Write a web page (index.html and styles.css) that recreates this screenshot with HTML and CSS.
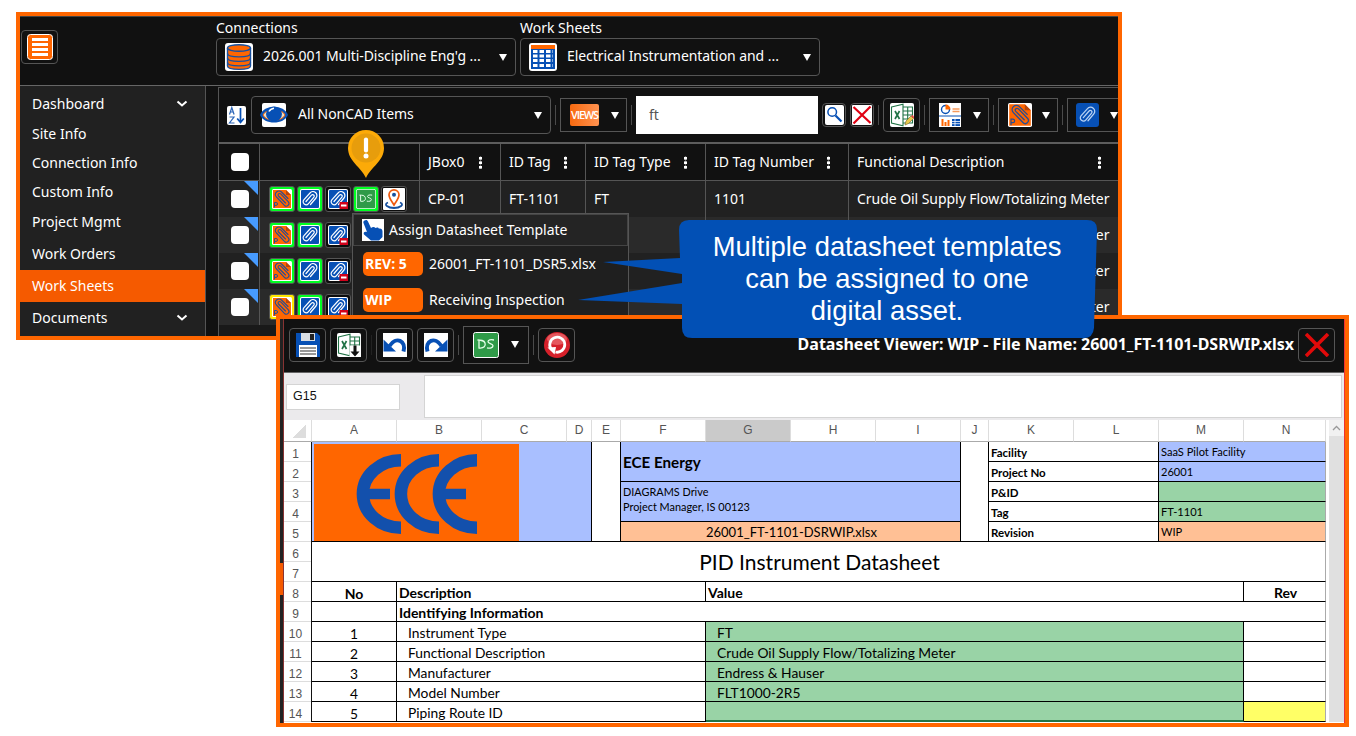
FILE: index.html
```html
<!DOCTYPE html>
<html lang="en">
<head>
  <meta charset="UTF-8">
  <meta name="viewport" content="width=device-width, initial-scale=1.0">
  <title>Work Sheets - Datasheet Viewer</title>
  <link rel="stylesheet" href="styles.css">
</head>
<body>
  <!-- Shared icons -->
  <svg class="defs" width="0" height="0">
    <symbol id="i-clip" viewBox="0 0 20 20">
      <path d="M6 12.500 11.500 6.200a1.500 1.500 0 0 1 2.400 2L8.500 14.600a3 3 0 0 1-4.700-3.800L10 4a3.800 3.800 0 0 1 6 5l-5.500 6.500" fill="none" stroke="currentColor" stroke-width="1.200" stroke-linecap="round"/>
    </symbol>
    <symbol id="i-punch" viewBox="0 0 20 20">
      <rect width="20" height="20" rx="1.500" fill="#fff"/>
      <path d="M1 1h13l5 5v13H1z" fill="#f60"/>
      <path d="M14 1v5h5z" fill="#b9450a"/>
      <path d="M13.500 14 6.500 7a1.500 1.500 0 0 1 2.200-2.100l7.500 7.800a2.600 2.600 0 0 1-3.800 3.600L4.500 8a3.500 3.500 0 0 1 5-5l6.500 6.500" fill="none" stroke="#274d92" stroke-width="1.100" stroke-linecap="round"/>
      <path d="M2.500 18.500v-5h1.600a1.400 1.400 0 0 1 0 2.900H2.500" fill="none" stroke="#274d92"/>
    </symbol>
    <symbol id="i-attach" viewBox="0 0 20 20">
      <rect width="20" height="20" rx="2" fill="#fff"/>
      <rect x="1" y="1" width="18" height="18" rx="1" fill="#0750b5"/>
      <use href="#i-clip" color="#fff"/>
    </symbol>
    <symbol id="i-detach" viewBox="0 0 20 20">
      <use href="#i-attach"/>
      <rect x="11.500" y="13" width="8.500" height="7" fill="#d0021b"/>
      <path d="M13 16.500h5.500" stroke="#fff" stroke-width="2"/>
    </symbol>
    <symbol id="i-pin" viewBox="0 0 22 22">
      <rect width="22" height="22" rx="1" fill="#fff"/>
      <path d="M5 14.500c-5 2 0 5.500 6 5.500s11-3.500 6-5.500" fill="none" stroke="#17509f" stroke-width="1.800"/>
      <path d="M11 17C8 12 6 10 6 6.800a5 5 0 0 1 10 0C16 10 14 12 11 17z" fill="#fff" stroke="#f0590d" stroke-width="1.700"/>
      <circle cx="11" cy="6.800" r="2" fill="#17509f"/>
    </symbol>
    <symbol id="i-ds" viewBox="0 0 26 26">
      <rect x=".500" y=".500" width="25" height="25" rx="2" fill="#2f9a48" stroke="#fff"/>
      <path d="M6 8v8c5 .500 7-2 6-5S8 8 4.500 8M21 8c-3.500-.700-6 0-6 1.700 0 2.100 5 1.600 5 4.100 0 2-3 2.700-6 2" fill="none" stroke="#e5ffe9" stroke-width="1.300"/>
    </symbol>
    <symbol id="i-excel" viewBox="0 0 24 24">
      <rect width="24" height="24" rx="2" fill="#fff"/>
      <path d="M1.500 4 13 1.300v21.400L1.500 20z" fill="#fff" stroke="#217346" stroke-width="1.100"/>
      <path d="m5 8 4.500 8m0-8L5 16" stroke="#217346" stroke-width="1.700"/>
      <path d="M13 4h9.500v16H13M13 8h9.500M13 12h9.500M13 16h9.500M17.700 4v16" fill="none" stroke="#217346" stroke-width="1.100"/>
    </symbol>
    <symbol id="i-undo" viewBox="0 0 24 24">
      <rect width="24" height="24" fill="#fff"/>
      <path d="M20.500 18.500c3-11-7.500-15.500-14-5.500" fill="none" stroke="#0750b5" stroke-width="4"/>
      <path d="M.500 6.500v12H13z" fill="#0750b5"/>
    </symbol>
  </svg>

  <main class="canvas">
    <section class="window app">
      <header class="topbar">
        <button class="icon-btn menu-btn">
          <svg width="26" height="26" viewBox="0 0 26 26"><rect x=".500" y=".500" width="25" height="25" rx="3" fill="#f60" stroke="#fff"/><path d="M5 5.500h16M5 10.500h16M5 15.500h16M5 20.500h16" stroke="#fff" stroke-width="3"/></svg>
        </button>
        <div class="field">
          <label>Connections</label>
          <div class="select">
            <svg width="28" height="28" viewBox="0 0 28 28"><rect width="28" height="28" rx="3" fill="#fff"/><path d="M2.500 5v18c0 4.500 23 4.500 23 0V5" fill="#f60" stroke="#17509f" stroke-width="1.400"/><ellipse cx="14" cy="5" rx="11.500" ry="3.300" fill="#f60" stroke="#17509f" stroke-width="1.400"/><path d="M2.500 10.500c0 4.500 23 4.500 23 0M2.500 15c0 4.500 23 4.500 23 0M2.500 19.500c0 4.500 23 4.500 23 0" fill="none" stroke="#17509f" stroke-width="1.400"/></svg>
            <span>2026.001 Multi-Discipline Eng'g ...</span><i class="caret"></i>
          </div>
        </div>
        <div class="field">
          <label>Work Sheets</label>
          <div class="select">
            <svg width="28" height="28" viewBox="0 0 28 28"><rect width="28" height="28" rx="3" fill="#fff"/><path d="M2 2h24v4H2z" fill="#f60"/><path d="M2 6h24v20H2z" fill="#0750b5"/><path d="M4 8.500h20M4 13h20M4 17.500h20M4 22.500h20" stroke="#fff" stroke-width="3" stroke-dasharray="4.500 2"/></svg>
            <span>Electrical Instrumentation and ...</span><i class="caret"></i>
          </div>
        </div>
      </header>

      <div class="app-body">
        <nav class="sidebar">
          <a class="first">Dashboard <svg width="12" height="8" viewBox="0 0 12 8"><path d="m1.500 1.500 4.500 4 4.500-4" fill="none" stroke="#fff" stroke-width="2"/></svg></a>
          <a class="short">Site Info</a>
          <a class="short">Connection Info</a>
          <a class="short">Custom Info</a>
          <a>Project Mgmt</a>
          <a>Work Orders</a>
          <a class="active">Work Sheets</a>
          <a>Documents <svg width="12" height="8" viewBox="0 0 12 8"><path d="m1.500 1.500 4.500 4 4.500-4" fill="none" stroke="#fff" stroke-width="2"/></svg></a>
        </nav>

        <div class="content">
          <div class="toolbar">
            <svg class="sort" width="19" height="19" viewBox="0 0 19 19"><rect width="19" height="19" rx="2" fill="#fff"/><path d="m2.500 8.500 2.300-7 2.300 7M3.300 6h3M2.500 11h4.500l-4.500 6h5" fill="none" stroke="#2a64b8" stroke-width="1.200"/><path d="M13.500 2v14m-3.300-3.500 3.300 4 3.300-4" fill="none" stroke="#0750b5" stroke-width="1.700"/></svg>
            <div class="select">
              <svg width="28" height="26" viewBox="0 0 28 26"><rect x="2" y="1" width="24" height="24" rx="2" fill="#fff"/><path d="M0 13C4 2 24 2 28 13 24 23 4 23 0 13z" fill="#0750b5"/><path d="M3 13c3-7 19-7 22 0-3 7-19 7-22 0z" fill="#e8dcc8" stroke="#f60" stroke-width="1"/><ellipse cx="14" cy="12" rx="8" ry="7.500" fill="#0750b5"/><path d="M9 9.500c1-2 2.500-3 5-3.300" fill="none" stroke="#fff" stroke-width="1.600"/></svg>
              <span>All NonCAD Items</span><i class="caret"></i>
            </div>
            <i class="sep"></i>
            <button class="drop views"><b class="views-icon">VIEWS</b><i class="caret"></i></button>
            <i class="sep"></i>
            <div class="search">ft</div>
            <button class="small-btn"><svg width="19" height="20" viewBox="0 0 19 20"><rect width="19" height="20" rx="2" fill="#fff"/><circle cx="7.200" cy="7" r="4.300" fill="#fff" stroke="#0750b5" stroke-width="1.500"/><path d="m10.500 10.500 6 6" stroke="#0750b5" stroke-width="2.200"/></svg></button>
            <button class="small-btn"><svg width="20" height="20" viewBox="0 0 20 20"><rect width="20" height="20" rx="1" fill="#fff"/><path d="m1.500 2 17 16M18.500 1.500l-17 17" stroke="#e00012" stroke-width="2.200"/></svg></button>
            <i class="sep"></i>
            <button class="icon-btn"><svg width="24" height="24"><use href="#i-excel"/><path d="m15 22 1-4 5-5 2.500 2.500-5 5z" fill="#e8c84e" stroke="#8a7433" stroke-width=".700"/><path d="m21 13 1.500-1 2 2-1 1.500z" fill="#e44"/></svg></button>
            <i class="sep"></i>
            <button class="drop report"><svg width="22" height="24" viewBox="0 0 22 24"><rect width="22" height="24" fill="#fff"/><circle cx="6.500" cy="6.500" r="4" fill="#fff" stroke="#0750b5" stroke-width="1.400"/><path d="M6.500 6.500v-5a5 5 0 0 1 5 5z" fill="#f60"/><path d="M13.500 6h7M13.500 8.500h7" stroke="#f79a5c" stroke-width="1.600"/><path d="M0 13h22" stroke="#0750b5"/><path d="M3.500 23v-7M6.500 23v-4M9.500 23v-6" stroke="#f60" stroke-width="2"/><path d="M13 16h8v7h-8z" fill="#0750b5"/><path d="M13 18.500h8M13 20.700h8M16 16v7" stroke="#fff" stroke-width=".800"/></svg><i class="caret"></i></button>
            <i class="sep"></i>
            <button class="drop punch"><svg width="24" height="24"><use href="#i-punch"/></svg><i class="caret"></i></button>
            <i class="sep"></i>
            <button class="drop attach"><svg width="23" height="24" viewBox="0 0 23 24"><rect width="23" height="24" rx="3" fill="#0750b5"/><use href="#i-clip" x="1" y="1" width="21" height="22" color="#b9d3f4"/></svg><i class="caret"></i></button>
          </div>

          <div class="grid">
            <div class="row head">
              <div class="cell check"><i class="box"></i></div>
              <div class="cell"></div>
              <div class="cell">JBox0<i class="kebab"></i></div>
              <div class="cell">ID Tag<i class="kebab"></i></div>
              <div class="cell">ID Tag Type<i class="kebab"></i></div>
              <div class="cell">ID Tag Number<i class="kebab"></i></div>
              <div class="cell">Functional Description<i class="kebab"></i></div>
            </div>
            <div class="row">
              <div class="cell check flag"><i class="box"></i></div>
              <div class="cell actions">
                <span class="act on"><svg><use href="#i-punch"/></svg></span>
                <span class="act on"><svg><use href="#i-attach"/></svg></span>
                <span class="act"><svg><use href="#i-detach"/></svg></span>
                <span class="act on"><svg><use href="#i-ds"/></svg></span>
                <span class="act"><svg class="big"><use href="#i-pin"/></svg></span>
              </div>
              <div class="cell">CP-01</div>
              <div class="cell">FT-1101</div>
              <div class="cell">FT</div>
              <div class="cell">1101</div>
              <div class="cell desc">Crude Oil Supply Flow/Totalizing Meter</div>
            </div>
            <div class="row alt">
              <div class="cell check flag"><i class="box"></i></div>
              <div class="cell actions">
                <span class="act on"><svg><use href="#i-punch"/></svg></span>
                <span class="act on"><svg><use href="#i-attach"/></svg></span>
                <span class="act"><svg><use href="#i-detach"/></svg></span>
              </div>
              <div class="cell"></div><div class="cell"></div><div class="cell"></div><div class="cell"></div>
              <div class="cell desc">Crude Oil Supply Flow/Totalizing Meter</div>
            </div>
            <div class="row">
              <div class="cell check flag"><i class="box"></i></div>
              <div class="cell actions">
                <span class="act on"><svg><use href="#i-punch"/></svg></span>
                <span class="act on"><svg><use href="#i-attach"/></svg></span>
                <span class="act"><svg><use href="#i-detach"/></svg></span>
              </div>
              <div class="cell"></div><div class="cell"></div><div class="cell"></div><div class="cell"></div>
              <div class="cell desc">Crude Oil Supply Flow/Totalizing Meter</div>
            </div>
            <div class="row alt">
              <div class="cell check flag"><i class="box"></i></div>
              <div class="cell actions">
                <span class="act warn"><svg><use href="#i-punch"/></svg></span>
                <span class="act on"><svg><use href="#i-attach"/></svg></span>
                <span class="act"><svg><use href="#i-detach"/></svg></span>
              </div>
              <div class="cell"></div><div class="cell"></div><div class="cell"></div><div class="cell"></div>
              <div class="cell desc">Crude Oil Supply Flow/Totalizing Meter</div>
            </div>
          </div>
        </div>
      </div>

      <!-- Datasheet menu -->
      <div class="menu">
        <div class="menu-head">
          <svg width="22" height="22" viewBox="0 0 22 22"><rect width="22" height="22" fill="#fff"/><path d="M2.500 1.500C4 .500 5.500 1 6 2.500L9 9c2-1.500 3.500-1 4.500 0 1.500-1 3-.500 3.500.700 2-.500 3.500.800 3.500 2.800V18l-3.500 3.500H9L2 15.500c-1-2 .500-3.500 3-2.500L1.500 4c-.400-1 0-2 1-2.500z" fill="#0750b5"/></svg>
          Assign Datasheet Template
        </div>
        <div class="menu-item"><b class="badge">REV: 5</b>26001_FT-1101_DSR5.xlsx</div>
        <div class="menu-item"><b class="badge">WIP</b>Receiving Inspection</div>
      </div>

      <svg class="alert-pin" width="36" height="48" viewBox="0 0 36 48"><path d="M18 48C13 37 0 31 0 18a18 18 0 0 1 36 0c0 13-13 19-18 30z" fill="#fcaa08"/><circle cx="18" cy="18" r="14.500" fill="#e79d0c"/><path d="M18 9.500v11" stroke="#fff" stroke-width="4.200" stroke-linecap="round"/><circle cx="18" cy="26" r="2.500" fill="#fff"/></svg>
    </section>

    <section class="window viewer">
      <div class="edge"><i></i></div>
      <div class="viewer-main">
        <header class="viewer-bar">
          <button class="icon-btn"><svg width="24" height="24" viewBox="0 0 24 24"><path d="M0 0h21l3 3v21H0z" fill="#0750b5"/><path d="M5 0h14v8H5z" fill="#d9dde2"/><path d="M14 1h4v6h-4z" fill="#222"/><path d="M3 12h18v12H3z" fill="#fff"/><path d="M4 15h16M4 18h16M4 21h16" stroke="#333" stroke-width="1.200"/></svg></button>
          <button class="icon-btn"><svg width="24" height="24"><use href="#i-excel"/><path d="M12.500 12.500H24V24H12.500z" fill="#fff"/><path d="M16.500 12.500h3v6h3L18 23.500l-4.500-5h3z" fill="#111"/></svg></button>
          <i class="sep dim"></i>
          <button class="icon-btn"><svg width="24" height="24"><use href="#i-undo"/></svg></button>
          <button class="icon-btn"><svg class="flip" width="24" height="24"><use href="#i-undo"/></svg></button>
          <i class="sep"></i>
          <button class="drop ds"><svg width="26" height="26"><use href="#i-ds"/></svg><i class="caret"></i></button>
          <i class="sep"></i>
          <button class="icon-btn"><svg width="26" height="26" viewBox="0 0 26 26"><circle cx="13" cy="13" r="13" fill="#d6202a"/><ellipse cx="13" cy="7" rx="10" ry="6" fill="#ef7d80" opacity=".600"/><path d="M7.500 17.500a7.500 7.500 0 1 1 4 2.500" fill="none" stroke="#fff" stroke-width="2.800"/><path d="m3.500 15.500 8.500-.500-1.500 7.500z" fill="#fff"/></svg></button>
          <h1>Datasheet Viewer: WIP - File Name: 26001_FT-1101-DSRWIP.xlsx</h1>
          <button class="icon-btn"><svg width="24" height="24" viewBox="0 0 24 24"><path d="m1 1 22 22M23 1 1 23" stroke="#e10a0a" stroke-width="3.600"/></svg></button>
        </header>

        <div class="formula">
          <div class="name-box">G15</div>
          <div class="formula-input"></div>
        </div>

        <div class="sheet-wrap">
          <div class="sheet">
            <div class="col corner"></div>
            <div class="col">A</div><div class="col">B</div><div class="col">C</div><div class="col">D</div><div class="col">E</div><div class="col">F</div><div class="col sel">G</div><div class="col">H</div><div class="col">I</div><div class="col">J</div><div class="col">K</div><div class="col">L</div><div class="col">M</div><div class="col last">N</div>

            <div class="num">1</div><div class="num">2</div><div class="num">3</div><div class="num">4</div><div class="num">5</div><div class="num">6</div><div class="num">7</div><div class="num">8</div><div class="num">9</div><div class="num">10</div><div class="num">11</div><div class="num">12</div><div class="num">13</div><div class="num">14</div>

            <div class="c logo">
              <svg width="205" height="97" viewBox="0 0 205 97"><path d="M0 0h205v97H0z" fill="#f60"/><g fill="none" stroke="#1350ac" stroke-width="12.500"><path d="M87 16.200a38 33.700 0 0 0 0 67.600M125 16.200a38 33.700 0 0 0 0 67.600M163 16.200a38 33.700 0 0 0 0 67.600"/><path d="M51 50h25M127 50h25" stroke-width="10.500"/></g></svg>
            </div>
            <div class="c gap-e"></div>
            <div class="c company">ECE Energy</div>
            <div class="c address">DIAGRAMS Drive<br>Project Manager, IS 00123</div>
            <div class="c file">26001_FT-1101-DSRWIP.xlsx</div>
            <div class="c gap-j"></div>

            <div class="c key r1">Facility</div><div class="c info blue r1">SaaS Pilot Facility</div>
            <div class="c key r2">Project No</div><div class="c info blue r2">26001</div>
            <div class="c key r3">P&amp;ID</div><div class="c info green r3"></div>
            <div class="c key r4">Tag</div><div class="c info green r4">FT-1101</div>
            <div class="c key r5">Revision</div><div class="c info peach r5">WIP</div>

            <div class="c title">PID Instrument Datasheet</div>

            <div class="c no r8 strong">No</div><div class="c name r8 strong">Description</div><div class="c val r8 strong">Value</div><div class="c rev r8 strong">Rev</div>
            <div class="c no r9"></div><div class="c name wide r9 strong">Identifying Information</div>
            <div class="c no r10">1</div><div class="c name r10 in">Instrument Type</div><div class="c val r10 in green">FT</div><div class="c rev r10"></div>
            <div class="c no r11">2</div><div class="c name r11 in">Functional Description</div><div class="c val r11 in green">Crude Oil Supply Flow/Totalizing Meter</div><div class="c rev r11"></div>
            <div class="c no r12">3</div><div class="c name r12 in">Manufacturer</div><div class="c val r12 in green">Endress &amp; Hauser</div><div class="c rev r12"></div>
            <div class="c no r13">4</div><div class="c name r13 in">Model Number</div><div class="c val r13 in green">FLT1000-2R5</div><div class="c rev r13"></div>
            <div class="c no r14">5</div><div class="c name r14 in">Piping Route ID</div><div class="c val r14 in green cursor"></div><div class="c rev r14 yellow"></div>
          </div>
          <div class="scroll"><svg width="15" height="16" viewBox="0 0 15 16"><path d="m4 10 3.500-3.500L11 10" fill="none" stroke="#999" stroke-width="1.300"/></svg></div>
        </div>
      </div>
    </section>

    <div class="callout">
      <svg width="520" height="118" viewBox="0 0 520 118"><path d="M111 0h398q10 0 10 9l-3 99q-1 10-10 10H114q-10 0-10-10V84L0 80l104-17V54L25 42l77-4-1-28q0-10 10-10z" fill="#0250b5"/></svg>
      <p>Multiple datasheet templates<br>can be assigned to one<br>digital asset.</p>
    </div>
  </main>
</body>
</html>
```
FILE: styles.css
```css
* { box-sizing: border-box; }

body {
  margin: 0;
  background: #fff;
  color: #fff;
  font: 14px/20px "Noto Sans", "Open Sans", sans-serif;
}

svg { display: block; flex-shrink: 0; }
button { background: none; padding: 0; font: inherit; color: inherit; }
.defs { position: absolute; }

.canvas {
  position: relative;
  width: 1356px;
  height: 736px;
  overflow: hidden;
}

/* Windows */
.window {
  position: absolute;
  border: 4px solid #f60;
  overflow: hidden;
}
.app {
  left: 16px;
  top: 12px;
  width: 1106px;
  height: 328px;
  background: #111;
  display: flex;
  flex-direction: column;
}
.viewer {
  left: 276px;
  top: 315px;
  width: 1073px;
  height: 412px;
  background: #fff;
  display: flex;
}

/* Buttons and selects */
.icon-btn {
  display: flex;
  align-items: center;
  justify-content: center;
  width: 37px;
  height: 34px;
  border: 1px solid #555;
  border-radius: 4px;
  flex-shrink: 0;
}
.small-btn {
  display: flex;
  align-items: center;
  justify-content: center;
  width: 24px;
  height: 24px;
  border: 1px solid #555;
  border-radius: 4px;
  flex-shrink: 0;
}
.drop {
  display: flex;
  align-items: center;
  justify-content: space-between;
  height: 34px;
  border: 1px solid #555;
  flex-shrink: 0;
}
.select {
  display: flex;
  align-items: center;
  width: 300px;
  height: 38px;
  padding: 0 8px;
  border: 1px solid #555;
  border-radius: 4px;
  flex-shrink: 0;
}
.select span {
  flex: 1;
  margin-left: 10px;
  padding-bottom: 2px;
  letter-spacing: -0.06px;
  white-space: nowrap;
}
.caret {
  border: 4px solid transparent;
  border-top: 7px solid #fff;
  border-bottom: 0;
}
.sep { width: 1px; height: 20px; background: #4a4a4a; flex-shrink: 0; }
.sep.dim { background: #222; }

/* Top bar */
.topbar {
  display: flex;
  height: 70px;
  border-top: 1px solid #444;
  border-bottom: 1px solid #666;
  flex-shrink: 0;
}
.menu-btn { margin: 13px 158px 0 1px; }
.field { margin-right: 4px; }
.field label { display: block; height: 21px; line-height: 21px; }

.app-body { display: flex; flex: 1; min-height: 0; }

/* Sidebar */
.sidebar {
  width: 186px;
  background: #212121;
  border-right: 1px solid #555;
  flex-shrink: 0;
}
.sidebar a {
  display: flex;
  align-items: center;
  justify-content: space-between;
  height: 32px;
  padding: 0 17px 0 12px;
}
.sidebar .first { height: 33px; padding-top: 2px; }
.sidebar .short { height: 29px; }
.sidebar .active { background: #f55a00; }

/* Work sheet toolbar */
.content {
  flex: 1;
  min-width: 0;
  margin: 1px 0 0 12px;
  border-left: 1px solid #555;
  border-top: 1px solid #555;
  background: #191919;
}
.toolbar {
  display: flex;
  align-items: center;
  gap: 4px;
  height: 56px;
  padding-left: 8px;
  border-bottom: 2px solid #5d5d5d;
  background: #111;
  overflow: hidden;
}
.toolbar .sort { margin-right: 1px; }
.views { width: 67px; padding: 0 7px 0 9px; }
.views-icon {
  width: 29px;
  height: 22px;
  border-radius: 2px;
  background: linear-gradient(90deg, #f86a10, #ff9250);
  font: 600 11px/22px "Open Sans", sans-serif;
  letter-spacing: -1.2px;
  text-align: center;
}
.search {
  width: 182px;
  height: 38px;
  padding-left: 13px;
  background: #fff;
  color: #555;
  line-height: 38px;
  flex-shrink: 0;
}
.report { width: 60px; padding: 0 7px 0 9px; }
.punch { width: 60px; padding: 0 7px 0 9px; }
.attach { width: 60px; padding: 0 8px; }

/* Grid */
.row {
  display: grid;
  grid-template-columns: 41px 160px 81px 85px 120px 143px 1fr;
  height: 36px;
  background: #212121;
}
.row.alt { background: #2a2a2a; }
.row.head {
  height: 37px;
  background: #111;
  border-bottom: 1px solid #555;
}
.cell {
  display: flex;
  align-items: center;
  justify-content: space-between;
  padding: 0 18px 0 8px;
  border-right: 1px solid #555;
  white-space: nowrap;
}
.cell:last-child { border-right: 0; padding-right: 17px; }
.cell.desc { padding-right: 0; letter-spacing: -0.05px; }
.cell.check { padding-left: 12px; padding-right: 0; position: relative; }
.box { width: 18px; height: 18px; border-radius: 4px; background: #fff; flex-shrink: 0; }
.flag::after {
  content: "";
  position: absolute;
  right: 1px;
  top: 0;
  border: 7px solid #479bff;
  border-left-color: transparent;
  border-bottom-color: transparent;
}
.kebab {
  width: 3px;
  height: 13px;
  background: radial-gradient(circle, #fff 1.6px, transparent 1.9px) 0 0 / 3px 4.5px;
}
.cell.actions { justify-content: flex-start; gap: 2px; padding: 0 0 0 9px; }
.act {
  display: flex;
  align-items: center;
  justify-content: center;
  width: 26px;
  height: 26px;
  border: 1px solid #555;
  border-radius: 3px;
  background: #0c0c0c;
  flex-shrink: 0;
}
.act svg { width: 20px; height: 20px; }
.act .big { width: 22px; height: 22px; }
.act.on { background: #0f2; }
.act.warn { background: #ffe800; }

/* Menu over the grid */
.menu {
  position: absolute;
  left: 332px;
  top: 197px;
  width: 277px;
  height: 130px;
  background: #1f1f1f;
  border: 1px solid #555;
}
.menu-head {
  display: flex;
  align-items: center;
  gap: 5px;
  height: 32px;
  padding-left: 8px;
  border: 1px solid #444;
  background: #242424;
}
.menu-item { display: flex; align-items: center; height: 36px; padding-left: 10px; }
.badge {
  width: 60px;
  height: 24px;
  margin-right: 6px;
  padding-left: 2px;
  border-radius: 5px;
  background: #f60;
  font: 700 14px/23px "Open Sans", sans-serif;
}
.alert-pin { position: absolute; left: 328px; top: 114px; }

/* Datasheet viewer */
.edge { width: 4px; background: #222; border-right: 1px solid #833; padding-top: 244px; }
.edge i { display: block; height: 32px; background: #f55a00; }
.viewer-main { flex: 1; min-width: 0; border-right: 1px solid #e33; }
.viewer-bar {
  display: flex;
  align-items: center;
  gap: 4px;
  height: 54px;
  padding: 0 9px 2px 5px;
  background: #111;
  border-bottom: 1px solid #666;
}
.flip { transform: scaleX(-1); }
.drop.ds { width: 66px; height: 38px; padding: 0 9px; }
.viewer-bar h1 {
  flex: 1;
  margin: 0;
  padding-bottom: 2px;
  font: 700 16px/20px "Noto Sans", sans-serif;
  text-align: right;
  white-space: nowrap;
}

.formula {
  display: flex;
  align-items: center;
  height: 47px;
  padding: 0 2px;
  background: #ebeaec;
  color: #111;
  font: 12.5px "Liberation Sans", sans-serif;
}
.name-box {
  width: 114px;
  height: 26px;
  padding-left: 6px;
  border: 1px solid #d4d4d4;
  background: #fff;
  line-height: 23px;
}
.formula-input {
  flex: 1;
  height: 43px;
  margin-left: 24px;
  border: 1px solid #d4d4d4;
  background: #fff;
}

/* Spreadsheet */
.sheet-wrap { display: flex; }
.sheet {
  display: grid;
  grid-template-columns: 28px 85px 85px 85px 25px 29px 85px 85px 85px 85px 28px 85px 85px 85px 82px;
  grid-template-rows: 22px repeat(14, 20px);
  width: 1042px;
  background: #fff;
  color: #000;
  font: 13.8px/21px Lato, sans-serif;
}
.col {
  border-right: 1px solid #ddd;
  border-bottom: 1px solid #aaa;
  color: #555;
  font: 12px/21px "Liberation Sans", sans-serif;
  text-align: center;
}
.col.last { padding-left: 3px; }
.col.sel { background: #cacaca; }
.corner { background: linear-gradient(135deg, transparent 50%, #ddd 50%) 9px 5px / 13px 13px no-repeat; }
.num {
  grid-column: 1;
  height: 20px;
  padding-right: 4px;
  border-right: 1px solid #111;
  background: linear-gradient(#ddd, #ddd) 0 100% / 100% 1px no-repeat;
  color: #555;
  font: 12px/24px "Liberation Sans", sans-serif;
  text-align: center;
}

.c {
  border-right: 1px solid #000;
  border-bottom: 1px solid #000;
  padding-left: 2px;
  white-space: nowrap;
  overflow: hidden;
}
.blue, .logo, .company, .address { background: #a9bfff; }
.green { background: #99d3a6; }
.peach, .file { background: #ffc095; }
.yellow { background: #ff6; }

.logo { grid-area: 2 / 2 / 7 / 6; padding-top: 2px; }
.gap-e { grid-area: 2 / 6 / 7 / 7; }
.company { grid-area: 2 / 7 / 4 / 11; font-size: 15.2px; font-weight: 700; line-height: 41px; }
.address { grid-area: 4 / 7 / 6 / 11; padding-top: 2px; font-size: 10.9px; line-height: 15px; }
.file { grid-area: 6 / 7 / 7 / 11; text-align: center; font-size: 13px; line-height: 21px; }
.gap-j { grid-area: 2 / 11 / 7 / 12; }
.key { grid-column: 12 / 14; font-weight: 700; font-size: 11.5px; line-height: 22px; }
.info { grid-column: 14 / 16; font-size: 11.1px; line-height: 20px; border-right-color: #aaa; }
.title {
  grid-area: 7 / 2 / 9 / 16;
  border-right-color: #aaa;
  font-size: 21px;
  line-height: 40px;
  text-align: center;
}
.no { grid-column: 2; text-align: center; line-height: 23px; padding-left: 0; }
.name { grid-column: 3 / 8; }
.name.wide { grid-column: 3 / 16; border-right-color: #aaa; }
.val { grid-column: 8 / 15; }
.rev { grid-column: 15; text-align: center; border-right-color: #aaa; }
.in { padding-left: 11px; }
.strong { font-weight: 700; font-size: 14px; }
.cursor { border-bottom: 2px solid #217346; }

.r1 { grid-row: 2; }
.r2 { grid-row: 3; }
.r3 { grid-row: 4; }
.r4 { grid-row: 5; }
.r5 { grid-row: 6; }
.r8 { grid-row: 9; }
.r9 { grid-row: 10; }
.r10 { grid-row: 11; }
.r11 { grid-row: 12; }
.r12 { grid-row: 13; }
.r13 { grid-row: 14; }
.r14 { grid-row: 15; }

.scroll { width: 15px; margin-left: 3px; background: #e0e0e0; }
.scroll svg { background: #f1f1f1; }

/* Callout */
.callout { position: absolute; left: 578px; top: 220px; width: 520px; }
.callout p {
  position: absolute;
  left: 101px;
  top: 11px;
  width: 416px;
  margin: 0;
  font: 27.4px/32px "Liberation Sans", sans-serif;
  text-align: center;
}
```
